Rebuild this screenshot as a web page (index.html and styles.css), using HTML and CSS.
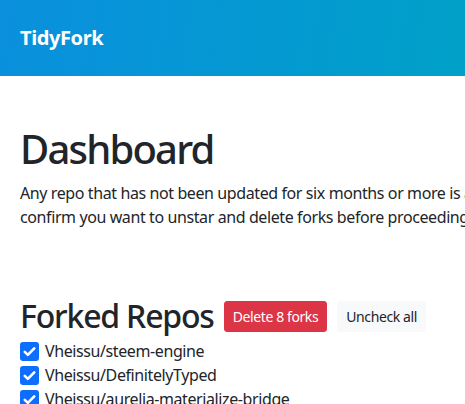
FILE: index.html
```html
<!DOCTYPE html>
<html lang="en">
<head>
  <meta charset="UTF-8" />
  <meta name="viewport" content="width=device-width, initial-scale=1.0" />
  <title>TidyFork</title>
  <link rel="stylesheet" href="styles.css">
</head>
<body>
  <nav class="navbar">
    <a class="brand" href="#">TidyFork</a>
  </nav>

  <main class="container">
    <h1>Dashboard</h1>
    <p class="lead-text">Any repo that has not been updated for six months or more is automatically selected. Please<br>confirm you want to unstar and delete forks before proceeding.</p>

    <div class="repos-head">
      <h2>Forked Repos</h2>
      <button class="btn btn-danger">Delete 8 forks</button>
      <button class="btn btn-light">Uncheck all</button>
    </div>

    <ul class="repo-list">
      <li class="repo">
        <span class="check"><svg viewBox="0 0 16 16"><path d="M4 8.3l2.6 2.6L12 5.4" /></svg></span>
        Vheissu/steem-engine
      </li>
      <li class="repo">
        <span class="check"><svg viewBox="0 0 16 16"><path d="M4 8.3l2.6 2.6L12 5.4" /></svg></span>
        Vheissu/DefinitelyTyped
      </li>
      <li class="repo">
        <span class="check"><svg viewBox="0 0 16 16"><path d="M4 8.3l2.6 2.6L12 5.4" /></svg></span>
        Vheissu/aurelia-materialize-bridge
      </li>
    </ul>
  </main>
</body>
</html>
```

FILE: styles.css
```css
html, body {
  overflow: hidden;
}

body {
  margin: 0;
  font-family: 'Noto Sans', sans-serif;
  color: #212529;
  background-color: #fff;
  font-size: 16px;
  line-height: 1.5;
  letter-spacing: -0.025em;
}

.navbar {
  display: flex;
  align-items: center;
  height: 76px;
  padding: 0 20px;
  background: linear-gradient(100deg, #0a90de 0%, #00a0c8 100%);
}

.brand {
  color: #fff;
  font-size: 20px;
  font-weight: bold;
  text-decoration: none;
}

.container {
  padding: 0 20px;
}

h1 {
  font-size: 40px;
  font-weight: 500;
  line-height: 1.2;
  letter-spacing: -0.045em;
  margin: 49px 0 8px;
}

.lead-text {
  margin: 0 0 68px;
  white-space: nowrap;
}

.repos-head {
  display: flex;
  align-items: center;
  gap: 10px;
}

h2 {
  font-size: 32px;
  font-weight: 500;
  line-height: 1.2;
  letter-spacing: -0.037em;
  margin: 0;
}

.btn {
  font-family: inherit;
  font-size: 14px;
  letter-spacing: inherit;
  line-height: 1.5;
  padding: 4px 8px;
  border: 1px solid transparent;
  border-radius: 3px;
  cursor: pointer;
}

.btn-danger {
  background-color: #dc3545;
  border-color: #dc3545;
  color: #fff;
}

.btn-light {
  background-color: #f8f9fa;
  border-color: #f8f9fa;
  color: #212529;
}

.repo-list {
  list-style: none;
  margin: 4px 0 0;
  padding: 0;
}

.repo {
  display: flex;
  align-items: center;
  gap: 6px;
  height: 24px;
}

.check {
  display: inline-flex;
  width: 19px;
  height: 19px;
  border-radius: 3px;
  background-color: #0d6efd;
}

.check svg {
  width: 19px;
  height: 19px;
  fill: none;
  stroke: #fff;
  stroke-width: 2.2;
  stroke-linecap: round;
  stroke-linejoin: round;
}
```
